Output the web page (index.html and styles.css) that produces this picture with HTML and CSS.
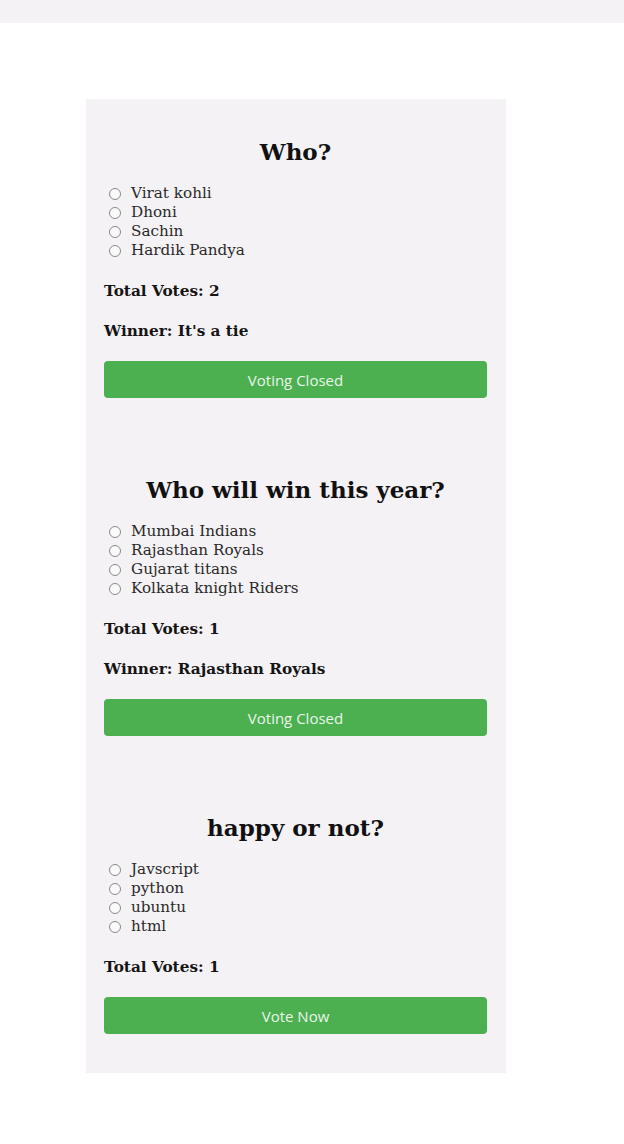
FILE: index.html
```html
<!DOCTYPE html>
<html>
<head>
<meta charset="utf-8">
<link rel="stylesheet" href="styles.css">
</head>
<body>
<div class="topbar"></div>
<main class="polls">
  <section class="card">
    <h2 class="question">Who?</h2>
    <ul class="options">
      <li><span class="radio"></span>Virat kohli</li>
      <li><span class="radio"></span>Dhoni</li>
      <li><span class="radio"></span>Sachin</li>
      <li><span class="radio"></span>Hardik Pandya</li>
    </ul>
    <p class="total">Total Votes: 2</p>
    <p class="winner">Winner: It's a tie</p>
    <button class="btn">Voting Closed</button>
  </section>
  <section class="card">
    <h2 class="question">Who will win this year?</h2>
    <ul class="options">
      <li><span class="radio"></span>Mumbai Indians</li>
      <li><span class="radio"></span>Rajasthan Royals</li>
      <li><span class="radio"></span>Gujarat titans</li>
      <li><span class="radio"></span>Kolkata knight Riders</li>
    </ul>
    <p class="total">Total Votes: 1</p>
    <p class="winner">Winner: Rajasthan Royals</p>
    <button class="btn">Voting Closed</button>
  </section>
  <section class="card">
    <h2 class="question">happy or not?</h2>
    <ul class="options">
      <li><span class="radio"></span>Javscript</li>
      <li><span class="radio"></span>python</li>
      <li><span class="radio"></span>ubuntu</li>
      <li><span class="radio"></span>html</li>
    </ul>
    <p class="total">Total Votes: 1</p>
    <button class="btn">Vote Now</button>
  </section>
</main>
</body>
</html>
```
FILE: styles.css
```css
html, body {
  margin: 0;
  padding: 0;
  background: #ffffff;
}
body {
  font-family: "DejaVu Serif", serif;
  color: #1e1e1e;
}
.topbar {
  height: 23px;
  background: #f5f2f5;
}
.polls {
  width: 420px;
  margin: 76px 0 0 86px;
  display: flex;
  flex-direction: column;
}
.card {
  background: #f5f2f5;
  padding: 40px 19px 39px 18px;
  display: flex;
  flex-direction: column;
}
.question {
  margin: 0 0 19px;
  font-size: 23px;
  line-height: 26px;
  font-weight: bold;
  text-align: center;
  color: #111;
}
.options {
  list-style: none;
  margin: 0;
  padding: 0;
  font-size: 15.2px;
  line-height: 19px;
  color: #2a2a2a;
}
.options li {
  display: flex;
  align-items: center;
}
.radio {
  width: 10px;
  height: 10px;
  border: 1px solid #8a8a8a;
  border-radius: 50%;
  background: #fbfafb;
  margin: 1px 10px 0 5px;
  flex: none;
}
.total, .winner {
  margin: 22px 0 0;
  font-size: 15.3px;
  line-height: 19px;
  font-weight: bold;
  color: #151515;
}
.winner {
  margin-top: 21px;
}
.btn {
  margin-top: 20px;
  height: 37px;
  border: none;
  border-radius: 4px;
  background: #4caf50;
  color: #eaf5ea;
  font-family: "Open Sans", sans-serif;
  font-size: 15px;
  padding: 0;
  width: 100%;
}
```
